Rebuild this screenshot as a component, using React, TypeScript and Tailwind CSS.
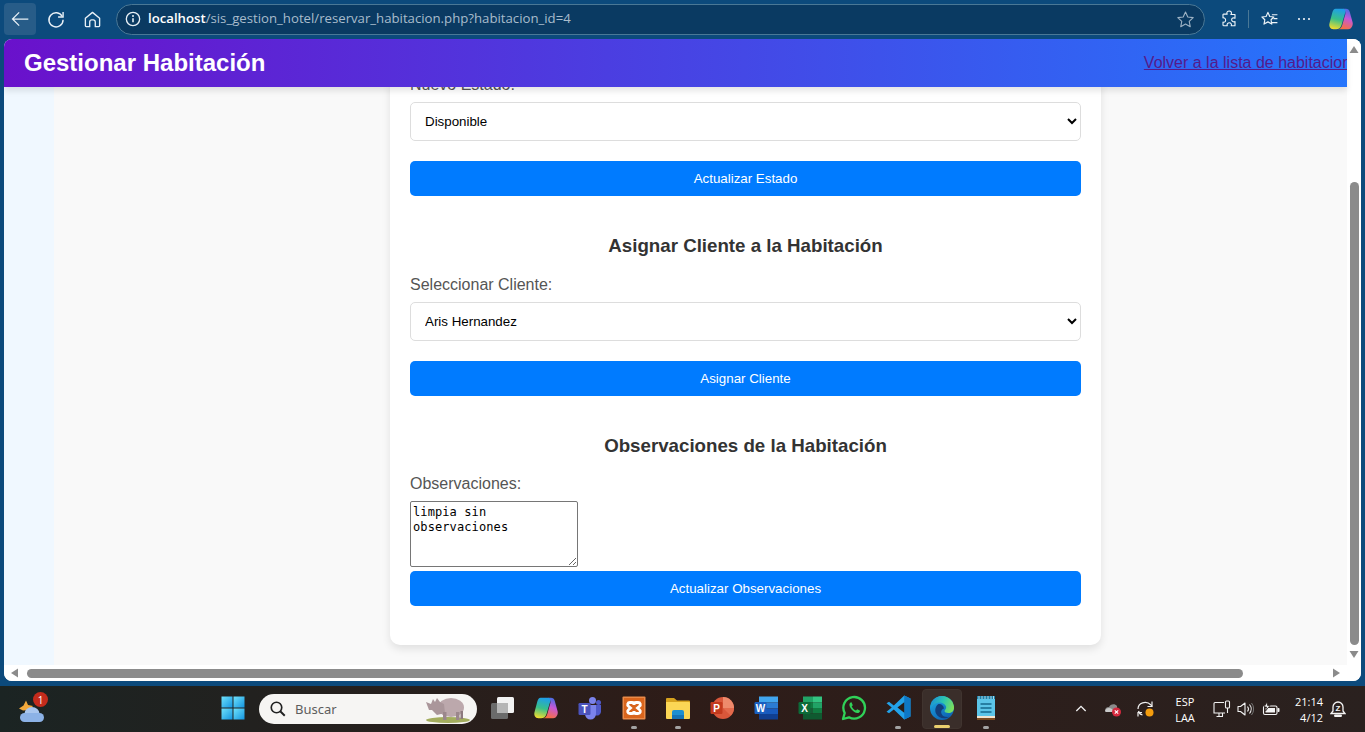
import React from "react";

const Ic = ({ s = 24, children, box = "0 0 24 24" }: { s?: number; children: React.ReactNode; box?: string }) => (
  <svg width={s} height={s} viewBox={box} fill="none">{children}</svg>
);

const Back = () => (
  <Ic s={20}><path d="M22 12H3M11 4l-8 8 8 8" stroke="#e8f0f6" strokeWidth="1.500" /></Ic>
);
const Reload = () => (
  <Ic s={20}><path d="M19.500 9A8.500 8.500 0 1 0 20.500 13" stroke="#e8f0f6" strokeWidth="1.700" /><path d="M14.500 8.500h6v-6" stroke="#e8f0f6" strokeWidth="1.700" transform="translate(0 1)" /></Ic>
);
const Home = () => (
  <Ic s={19}><path d="M3 10.500 12 3l9 7.500V20a1 1 0 0 1-1 1h-4.500v-6a2.500 2.500 0 0 0-2.500-2.500h-2A2.500 2.500 0 0 0 8.500 15v6H4a1 1 0 0 1-1-1z" stroke="#e8f0f6" strokeWidth="1.700" strokeLinejoin="round" /></Ic>
);
const Info = () => (
  <Ic s={16}><circle cx="12" cy="12" r="10" stroke="#e8f0f6" strokeWidth="2" /><path d="M12 11v6" stroke="#e8f0f6" strokeWidth="2.400" /><circle cx="12" cy="7.500" r="1.500" fill="#e8f0f6" /></Ic>
);
const StarO = () => (
  <Ic s={19}><path d="m12 2.500 2.900 6.300 6.800.8-5 4.700 1.300 6.800-6-3.400-6 3.400 1.300-6.800-5-4.700 6.800-.8z" stroke="#9db2c4" strokeWidth="1.400" strokeLinejoin="round" /></Ic>
);
const Puzzle = () => (
  <Ic s={18}><path d="M9.500 5.500C8 2.500 11 1 13 1.500c2.500.5 3 3 1.500 4.500H20v5c-2-1.200-4.500 0-4.500 2s2.500 3.500 4.500 2.500v5.500h-5c1-2-.5-4-2.500-4s-3.800 2-2.800 4H5a1 1 0 0 1-1-1v-4C6 17 7.500 15.500 7.500 13.500S6 10 4 10.500V7a1 1 0 0 1 1-1.500z" stroke="#eef4f8" strokeWidth="1.500" strokeLinejoin="round" /></Ic>
);
const FavList = () => (
  <Ic s={19}><path d="m10 3 2.300 5.200 5.200.6-3.600 3.500 1 5.500L10 15l-4.900 2.800 1-5.500L2.500 8.800l5.200-.6z" stroke="#eef4f8" strokeWidth="1.500" strokeLinejoin="round" /><path d="M15 6h7M17 11h5M15 16h7" stroke="#eef4f8" strokeWidth="1.500" /></Ic>
);

const CopilotIcon = ({ id, s }: { id: string; s: number }) => (
  <svg width={s} height={s} viewBox="0 0 24 24">
    <defs>
      <linearGradient id={id + "a"} x1="0.5" y1="0" x2="0.3" y2="1">
        <stop offset="0" stopColor="#1f9fe8" />
        <stop offset="0.5" stopColor="#38c08a" />
        <stop offset="1" stopColor="#f4dc2c" />
      </linearGradient>
      <linearGradient id={id + "b"} x1="0.7" y1="0" x2="0.4" y2="1">
        <stop offset="0" stopColor="#3f6fe6" />
        <stop offset="0.45" stopColor="#c658d6" />
        <stop offset="1" stopColor="#f9703c" />
      </linearGradient>
    </defs>
    <path d="M13 2.500h3.500c2 0 3 1 3.600 3l2.600 9.500c.8 3-1.500 6.500-4 6.500H9c2 0 3.500-1.500 4.200-4L16 7.500C16.700 5 15 2.500 13 2.500z" fill={`url(#${id}b)`} />
    <path d="M7 2.500h6.500c2 0 3 1.500 2.400 3.500L12.500 17.500c-.7 2.500-2.500 4-5 4H5c-3 0-4.500-3-3.500-6L4 6c.6-2 1.500-3.500 3-3.500z" fill={`url(#${id}a)`} />
  </svg>
);

const Weather = () => (
  <svg width={30} height={30} viewBox="0 0 30 30">
    <path d="M9 6.500 11 11l5 1-4 4-6 .5-4-2 4.500-3z" fill="#f2a93b" />
    <ellipse cx="15" cy="19.500" rx="7.500" ry="6.500" fill="#a9c6ee" />
    <rect x="3" y="19" width="24" height="9" rx="4.500" fill="#8cb2e6" />
  </svg>
);

const Windows = () => (
  <svg width={24} height={24} viewBox="0 0 24 24">
    <defs>
      <linearGradient id="win" x1="0" y1="0" x2="1" y2="1">
        <stop offset="0" stopColor="#6fe2fb" />
        <stop offset="1" stopColor="#1495e0" />
      </linearGradient>
    </defs>
    <rect x="0.500" y="0.500" width="11" height="11" fill="url(#win)" />
    <rect x="12.500" y="0.500" width="11" height="11" fill="url(#win)" />
    <rect x="0.500" y="12.500" width="11" height="11" fill="url(#win)" />
    <rect x="12.500" y="12.500" width="11" height="11" fill="url(#win)" />
  </svg>
);

const Rhino = () => (
  <svg width={46} height={28} viewBox="0 0 46 28">
    <ellipse cx="23" cy="25" rx="22" ry="3" fill="#a3ad5e" />
    <ellipse cx="26" cy="12.500" rx="13" ry="9.500" fill="#bca8ac" />
    <path d="M1 7 6 9l2-5 2 3 2-4 3 4 4 2 1 9-8 2-5-5-3 0z" fill="#aa969a" />
    <rect x="18" y="17" width="3.500" height="8" fill="#9b878c" />
    <rect x="31" y="17" width="3.500" height="8" fill="#9b878c" />
    <rect x="35.500" y="16" width="2.500" height="8" fill="#8d7a7f" />
  </svg>
);

const TaskView = () => (
  <svg width={24} height={24} viewBox="0 0 24 24">
    <rect x="1" y="7" width="17" height="16" rx="1.500" fill="#6b6b6b" />
    <rect x="7" y="1" width="17" height="16" rx="1.500" fill="#f2f2f2" />
    <rect x="7" y="7" width="11" height="10" fill="#b5b5b5" />
  </svg>
);

const Teams = () => (
  <svg width={24} height={24} viewBox="0 0 24 24">
    <circle cx="14.500" cy="4.500" r="3.500" fill="#7b83eb" />
    <circle cx="20.500" cy="6.500" r="2.500" fill="#5059c9" />
    <path d="M16 9h7v7a4 4 0 0 1-6 3z" fill="#5059c9" />
    <path d="M7 9h11v9a5 5 0 0 1-11 0z" fill="#7b83eb" />
    <rect x="0.500" y="7" width="12" height="12" rx="1.200" fill="#4b53bc" />
    <text x="6.500" y="16.500" fontSize="10" fontWeight="700" fill="#fff" textAnchor="middle" fontFamily="Liberation Sans">T</text>
  </svg>
);

const Xampp = () => (
  <svg width={24} height={24} viewBox="0 0 24 24">
    <rect x="0.500" y="0.500" width="23" height="23" rx="1" fill="#ea8a48" />
    <rect x="2" y="2" width="20" height="20" fill="#d9651d" />
    <path d="M8 6.500h2c1.500 0 2 1 2 2.500 0-1.500.5-2.500 2-2.500h2c2.500 0 3 2.500 1.500 3.800L15.500 12l2 1.700c1.500 1.300 1 3.800-1.500 3.800h-2c-1.500 0-2-1-2-2.500 0 1.500-.5 2.500-2 2.500H8c-2.500 0-3-2.500-1.500-3.800l2-1.700-2-1.700C5 9 5.500 6.500 8 6.500z" fill="none" stroke="#fff" strokeWidth="2.800" />
  </svg>
);

const Folder = () => (
  <svg width={24} height={24} viewBox="0 0 24 24">
    <path d="M0 3a1 1 0 0 1 1-1h7l3 2.500h12a1 1 0 0 1 1 1V8H0z" fill="#d6a21e" />
    <path d="M0 6h23a1 1 0 0 1 1 1v15a1 1 0 0 1-1 1H1a1 1 0 0 1-1-1z" fill="#fbd655" />
    <path d="M6 16a2 2 0 0 1 2-2h8a2 2 0 0 1 2 2v7H6z" fill="#1d8fd0" />
    <rect x="6" y="19" width="12" height="4" fill="#1673b5" />
  </svg>
);

const Ppt = () => (
  <svg width={24} height={24} viewBox="0 0 24 24">
    <circle cx="13" cy="12" r="11" fill="#d9573a" />
    <path d="M13 1a11 11 0 0 1 11 11H13z" fill="#ee8a6c" />
    <path d="M13 12h11a11 11 0 0 1-3.200 7.800z" fill="#e46a4c" />
    <rect x="0.500" y="6" width="12" height="12" rx="1.200" fill="#c33a1e" />
    <text x="6.500" y="15.800" fontSize="10" fontWeight="700" fill="#fff" textAnchor="middle" fontFamily="Liberation Sans">P</text>
  </svg>
);

const Word = () => (
  <svg width={24} height={24} viewBox="0 0 24 24">
    <rect x="5" y="0.500" width="19" height="6" fill="#41a5ee" />
    <rect x="5" y="6.500" width="19" height="6" fill="#2b7cd3" />
    <rect x="5" y="12.500" width="19" height="5.500" fill="#185abd" />
    <rect x="5" y="18" width="19" height="5.500" fill="#103f91" />
    <rect x="0.500" y="6" width="12" height="12" rx="1.200" fill="#1a5fc0" />
    <text x="6.500" y="15.800" fontSize="10" fontWeight="700" fill="#fff" textAnchor="middle" fontFamily="Liberation Sans">W</text>
  </svg>
);

const Excel = () => (
  <svg width={24} height={24} viewBox="0 0 24 24">
    <rect x="5" y="0.500" width="10" height="6" fill="#21a366" />
    <rect x="15" y="0.500" width="9" height="6" fill="#33c481" />
    <rect x="5" y="6.500" width="10" height="5.500" fill="#107c41" />
    <rect x="15" y="6.500" width="9" height="5.500" fill="#21a366" />
    <rect x="5" y="12" width="10" height="5.500" fill="#185c37" />
    <rect x="15" y="12" width="9" height="5.500" fill="#107c41" />
    <rect x="5" y="17.500" width="19" height="6" fill="#0f5a30" />
    <rect x="0.500" y="6" width="12" height="12" rx="1.200" fill="#0c6b38" />
    <text x="6.500" y="15.800" fontSize="10" fontWeight="700" fill="#fff" textAnchor="middle" fontFamily="Liberation Sans">X</text>
  </svg>
);

const Whatsapp = () => (
  <svg width={26} height={26} viewBox="0 0 26 26">
    <path d="M2 24l1.700-6A10.800 10.800 0 1 1 8 22.300z" fill="none" stroke="#30d158" strokeWidth="2.300" strokeLinejoin="round" />
    <path d="M9.500 7.500c-1.500 1-1.500 3 0 5.500s4 4.600 6.500 5c2 .2 3-1 3.200-2.300l-3-1.500-1.200 1.400c-1.800-.6-3.400-2.200-4.300-4l1.100-1.300-1.300-3z" fill="#30d158" />
  </svg>
);

const VsCode = () => (
  <svg width={25} height={25} viewBox="0 0 24 24">
    <path d="M17.500 0.500 23.500 3.400v17.200l-6 2.900L7.500 14l-4.600 3.500L0.500 16l5-4-5-4 2.400-1.500L7.500 10z" fill="#23a3ea" />
    <path d="M17.500 0.500 23.500 3.400v17.200l-6 2.900z" fill="#0e78c6" />
    <path d="M17.500 7 11 12l6.500 5z" fill="#2a1c18" />
  </svg>
);

const Edge = () => (
  <svg width={26} height={26} viewBox="0 0 26 26">
    <defs>
      <linearGradient id="edgeA" x1="0" y1="0" x2="0.600" y2="1">
        <stop offset="0" stopColor="#1fb0e8" />
        <stop offset="1" stopColor="#0e63b4" />
      </linearGradient>
      <linearGradient id="edgeB" x1="0" y1="0.300" x2="1" y2="0.600">
        <stop offset="0" stopColor="#1b90d8" />
        <stop offset="0.500" stopColor="#2cc6b0" />
        <stop offset="1" stopColor="#7ee05a" />
      </linearGradient>
    </defs>
    <circle cx="13" cy="13" r="12" fill="url(#edgeA)" />
    <path d="M9.500 9c-3 2-4 6-2.500 9.500 1.600 3.600 6 5.500 10.500 4.500 1-.2 2-.7 2.500-1.300-3 .8-6.500-.3-7.500-3-1-2.500.2-4.500 2.500-5.200C14.500 10 12 8.500 9.500 9z" fill="#123f7c" />
    <path d="M13 1a12 12 0 0 1 12 12c0 3-2.500 5-5.500 5-2.500 0-4-1-4-2 0-.5.500-1 1-1.700.8-1 .8-2.300.3-3.300-1.300-2.500-4.300-4-7.300-3.500-3.500.5-6.500 3-8 5.500C1.500 6.500 6.500 1 13 1z" fill="url(#edgeB)" />
  </svg>
);

const Notepad = () => (
  <svg width={24} height={26} viewBox="0 0 24 26">
    <rect x="3" y="1" width="18" height="23" rx="1" fill="#5cc5e8" />
    <rect x="3" y="21" width="18" height="2" fill="#f1e4cf" />
    <rect x="3" y="23" width="18" height="2" fill="#7a4a20" />
    <path d="M3 1h18v3H3z" fill="#1b7fa6" />
    <path d="M5 1v3M8 1v3M11 1v3M14 1v3M17 1v3M19.500 1v3" stroke="#d5eef7" strokeWidth="0.800" />
    <path d="M6.500 9h11M6.500 13h11M6.500 17h11" stroke="#15688c" strokeWidth="1.700" />
  </svg>
);

const Tray = {
  Chevron: () => <Ic s={16}><path d="m5 15 7-7 7 7" stroke="#f2f2f2" strokeWidth="2" /></Ic>,
  Cloud: () => (
    <svg width={18} height={16} viewBox="0 0 18 16">
      <path d="M1 10a4 4 0 0 1 4-4c1-3 6-4 8-1v6H2z" fill="#8b8b8b" />
      <path d="M1 10c1-3 4-4 7-2l2 3H2z" fill="#c9c9c9" />
      <circle cx="12.500" cy="11" r="4.500" fill="#d6293e" />
      <path d="m10.800 9.300 3.400 3.400m0-3.400-3.400 3.400" stroke="#fff" strokeWidth="1.100" />
    </svg>
  ),
  Sync: () => (
    <svg width={20} height={20} viewBox="0 0 20 20">
      <path d="M2 10c0-6 8-9 13-4l1 1.500" fill="none" stroke="#f1f1f1" strokeWidth="1.200" />
      <path d="M16 2.500V7.500h-4.500" fill="none" stroke="#f1f1f1" strokeWidth="1.200" />
      <path d="M2.500 12c.5 2 2 3.500 4 4" fill="none" stroke="#f1f1f1" strokeWidth="1.200" />
      <path d="M2 17.500V13.500h4" fill="none" stroke="#f1f1f1" strokeWidth="1.200" />
      <circle cx="13.500" cy="13.500" r="4" fill="#f59d0e" />
    </svg>
  ),
  Net: () => (
    <svg width={18} height={18} viewBox="0 0 18 18">
      <path d="M11 2.500H2a1 1 0 0 0-1 1V13h11" fill="none" stroke="#f1f1f1" strokeWidth="1.100" />
      <path d="M6 13v3M3.500 16.500H10M9.500 13v3" fill="none" stroke="#f1f1f1" strokeWidth="1.100" />
      <rect x="12.500" y="1" width="4" height="7" rx="1" fill="none" stroke="#f1f1f1" strokeWidth="1.100" />
      <path d="M14.500 8v5" stroke="#f1f1f1" strokeWidth="1.100" />
    </svg>
  ),
  Vol: () => (
    <svg width={17} height={16} viewBox="0 0 17 16">
      <path d="M1 5.500h2.500L8 2v12L3.500 10.500H1z" fill="none" stroke="#f1f1f1" strokeWidth="1.100" strokeLinejoin="round" />
      <path d="M10.500 5.500a4 4 0 0 1 0 5M12.500 3.500a7 7 0 0 1 0 9" fill="none" stroke="#f1f1f1" strokeWidth="1.100" />
      <path d="M14.500 2a9.500 9.500 0 0 1 0 12" fill="none" stroke="#777" strokeWidth="1" />
    </svg>
  ),
  Batt: () => (
    <svg width={18} height={14} viewBox="0 0 18 14">
      <rect x="1.500" y="4" width="13.500" height="8.500" rx="1.500" fill="#2a1f1c" stroke="#f4f4f4" strokeWidth="1.100" />
      <rect x="3.500" y="6" width="9.500" height="4.500" fill="#f4f4f4" />
      <rect x="15.500" y="6" width="2" height="4" rx="0.800" fill="#f4f4f4" />
      <path d="M5 0 2 5h2.500L3.500 9 8 3.500H5.500z" fill="#f4f4f4" stroke="#2a1f1c" strokeWidth="0.800" />
    </svg>
  ),
  Bell: () => (
    <svg width={16} height={18} viewBox="0 0 16 18">
      <path d="M8 2a5 5 0 0 0-5 5v4l-2 2.500h14L13 11V7a5 5 0 0 0-5-5z" fill="none" stroke="#f4f4f4" strokeWidth="1.300" />
      <rect x="4" y="14.500" width="8" height="2.500" rx="1.200" fill="#f4f4f4" />
      <text x="8" y="11" fontSize="8" fontWeight="700" fill="#f4f4f4" textAnchor="middle" fontFamily="Liberation Sans">Z</text>
    </svg>
  ),
};

const TaskItem = ({ children, dot, active }: { children: React.ReactNode; dot?: boolean; active?: boolean }) => (
  <div className="relative flex h-[46px] w-[44px] items-center justify-center">
    {active && <div className="absolute left-[2px] top-[3px] h-[40px] w-[40px] rounded-[4px] border border-[#40342f] bg-[#3a2e2a]" />}
    <div className="relative -mt-[3px] flex items-center justify-center">{children}</div>
    {dot && <div className="absolute bottom-[3px] left-[19px] h-[3px] w-[6px] rounded-full bg-[#a3a3a3]" />}
    {active && <div className="absolute bottom-[4px] left-[14px] h-[3px] w-[16px] rounded-full bg-[#e9cf6e]" />}
  </div>
);

const Section = ({ title, label, children, btn, low }: { title?: string; label: string; children: React.ReactNode; btn: string; low?: boolean }) => (
  <div>
    {title && <h3 className="mb-[19px] mt-[39px] h-[21px] text-center text-[18.720px] font-bold leading-[21px] text-[#333]">{title}</h3>}
    <label className={`block h-[18px] text-[16px] text-[#555] ${low ? "leading-[20px]" : "leading-[18px]"}`}>{label}</label>
    {children}
    <button className="block h-[35px] w-full rounded-[5px] bg-[#007bff] text-center text-[13.330px] text-white">{btn}</button>
  </div>
);

const Sel = ({ v }: { v: string }) => (
  <select defaultValue={v} className="mb-[20px] mt-[9px] block h-[39px] w-full rounded-[5px] border border-[#ddd] bg-white pl-[10px] text-[13.330px] text-black">
    <option>{v}</option>
  </select>
);

const Arrow = ({ dir }: { dir: "u" | "d" | "l" | "r" }) => {
  const d = { u: "M5 1 9.500 8H.5z", d: "M.5 2H9.500L5 9z", l: "M8 .5V9.500L1 5z", r: "M2 .5V9.500L9 5z" }[dir];
  return <svg width={10} height={10} viewBox="0 0 10 10"><path d={d} fill="#8b8b8b" /></svg>;
};

export default function App() {
  return (
    <div className="flex h-[732px] w-[1365px] flex-col overflow-hidden bg-[#0c4a7c] font-['Liberation_Sans',sans-serif]">
      {/* Browser toolbar */}
      <div className="flex h-[39px] items-center bg-[#0c4a7c] pb-[1px]">
        <div className="ml-[4px] flex h-[32px] w-[32px] items-center justify-center rounded-[4px] bg-[#275c88]"><Back /></div>
        <div className="ml-[4px] flex w-[32px] justify-center"><Reload /></div>
        <div className="ml-[4px] flex w-[32px] justify-center"><Home /></div>
        <div className="ml-[8px] flex h-[31px] w-[1089px] items-center rounded-full border border-[#4a7896] bg-[#0a3a62] pl-[8px] pr-[9px] font-['Open_Sans',sans-serif] text-[13.200px]">
          <Info />
          <span className="ml-[7px] whitespace-nowrap text-[#a8bccc]"><span className="font-semibold text-white">localhost</span>/sis_gestion_hotel/reservar_habitacion.php?habitacion_id=4</span>
          <div className="ml-auto flex"><StarO /></div>
        </div>
        <div className="ml-[15px] flex w-[18px]"><Puzzle /></div>
        <div className="ml-[10px] h-[18px] w-px bg-[#4a7896]" />
        <div className="ml-[11px] flex"><FavList /></div>
        <div className="ml-[19px] flex gap-[3px]">
          <div className="h-[2px] w-[2px] rounded-full bg-white" />
          <div className="h-[2px] w-[2px] rounded-full bg-white" />
          <div className="h-[2px] w-[2px] rounded-full bg-white" />
        </div>
        <div className="ml-[18px] flex"><CopilotIcon id="edgeco" s={26} /></div>
      </div>

      {/* Viewport */}
      <div className="mx-[4px] flex h-[642px] w-[1357px] flex-col overflow-hidden rounded-[8px] bg-white">
        <div className="flex h-[626px]">
          <div className="flex w-[1343px] flex-col">
            <header className="relative z-10 flex h-[48px] shrink-0 items-center justify-between overflow-hidden bg-linear-to-r/srgb from-[#6a11cb] to-[#2575fc] pl-[20px] shadow-[0_4px_6px_rgba(0,0,0,0.1)]">
              <h1 className="whitespace-nowrap text-[24px] font-bold leading-[28px] text-white">Gestionar Habitación</h1>
              <a href="#" className="-mr-[21px] whitespace-nowrap text-[16px] text-[#551a8b] underline">Volver a la lista de habitaciones</a>
            </header>
            <div className="flex min-h-0 flex-1 overflow-hidden">
              <div className="w-[50px] shrink-0 bg-[#f0f8ff]" />
              <main className="flex-1 bg-[#f9f9f9] pl-[336px]">
                <div className="-mt-[12px] w-[711px] rounded-[10px] bg-white px-[20px] pb-[39px] shadow-[0_4px_8px_rgba(0,0,0,0.1)]">
                  <Section low label="Nuevo Estado:" btn="Actualizar Estado"><Sel v="Disponible" /></Section>
                  <Section low title="Asignar Cliente a la Habitación" label="Seleccionar Cliente:" btn="Asignar Cliente"><Sel v="Aris Hernandez" /></Section>
                  <Section title="Observaciones de la Habitación" label="Observaciones:" btn="Actualizar Observaciones">
                    <textarea
                      readOnly
                      defaultValue="limpia sin observaciones"
                      className="mb-[4px] mt-[8px] block h-[66px] w-[168px] rounded-[2px] border border-[#767676] bg-white px-[2px] py-[3px] font-['DejaVu_Sans_Mono',monospace] text-[12px] leading-[15px] tracking-[0.1px] text-black"
                    />
                  </Section>
                </div>
              </main>
            </div>
          </div>
          {/* Vertical scrollbar */}
          <div className="flex w-[14px] flex-col items-center bg-white">
            <div className="mt-[6px]"><Arrow dir="u" /></div>
            <div className="mt-[127px] h-[463px] w-[9px] rounded-full bg-[#8b8b8b]" />
            <div className="mt-[4px]"><Arrow dir="d" /></div>
          </div>
        </div>
        {/* Horizontal scrollbar */}
        <div className="flex h-[16px] items-center bg-white pl-[6px]">
          <Arrow dir="l" />
          <div className="ml-[7px] h-[9px] w-[1216px] rounded-full bg-[#8b8b8b]" />
          <div className="ml-[88px]"><Arrow dir="r" /></div>
        </div>
      </div>

      {/* Taskbar */}
      <div className="mt-[5px] flex h-[46px] items-center bg-linear-to-r/srgb from-[#1b2423] via-[#2e1c18] to-[#2a211f]">
        <div className="relative ml-[17px] flex w-[30px]">
          <Weather />
          <div className="absolute -right-[1px] -top-[2px] flex h-[15px] w-[15px] items-center justify-center rounded-full bg-[#c42b1c] font-['Open_Sans',sans-serif] text-[10px] leading-none text-white">1</div>
        </div>
        <div className="ml-[164px] flex"><TaskItem><Windows /></TaskItem></div>
        <div className="ml-[4px] flex h-[30px] w-[218px] items-center rounded-full bg-[#f6f5f3] pl-[10px] font-['Noto_Sans',sans-serif] text-[13px] text-[#5d5d5d]">
          <Ic s={18}><circle cx="10" cy="10" r="7" stroke="#222" strokeWidth="2.200" /><path d="m15 15 6 6" stroke="#222" strokeWidth="2.600" /></Ic>
          <span className="ml-[8px] mt-[1px]">Buscar</span>
          <div className="ml-auto flex pr-[6px]"><Rhino /></div>
        </div>
        <div className="ml-[3px] flex">
          <TaskItem><TaskView /></TaskItem>
          <TaskItem><CopilotIcon id="taskco" s={26} /></TaskItem>
          <TaskItem><Teams /></TaskItem>
          <TaskItem dot><Xampp /></TaskItem>
          <TaskItem dot><Folder /></TaskItem>
          <TaskItem><Ppt /></TaskItem>
          <TaskItem><Word /></TaskItem>
          <TaskItem><Excel /></TaskItem>
          <TaskItem><Whatsapp /></TaskItem>
          <TaskItem dot><VsCode /></TaskItem>
          <TaskItem active><Edge /></TaskItem>
          <TaskItem dot><Notepad /></TaskItem>
        </div>
        <div className="ml-[65px] flex"><Tray.Chevron /></div>
        <div className="ml-[15px] flex"><Tray.Cloud /></div>
        <div className="ml-[14px] flex"><Tray.Sync /></div>
        <div className="ml-[11px] flex w-[36px] flex-col items-center pt-[1px] font-['Open_Sans',sans-serif] text-[11px] leading-[16px] text-white">
          <span>ESP</span>
          <span>LAA</span>
        </div>
        <div className="ml-[10px] flex"><Tray.Net /></div>
        <div className="ml-[6px] flex"><Tray.Vol /></div>
        <div className="ml-[8px] flex"><Tray.Batt /></div>
        <div className="ml-[8px] flex w-[35px] flex-col items-end pt-[1px] font-['Open_Sans',sans-serif] text-[11px] leading-[16px] text-white">
          <span>21:14</span>
          <span>4/12</span>
        </div>
        <div className="ml-[7px] flex"><Tray.Bell /></div>
      </div>
    </div>
  );
}
